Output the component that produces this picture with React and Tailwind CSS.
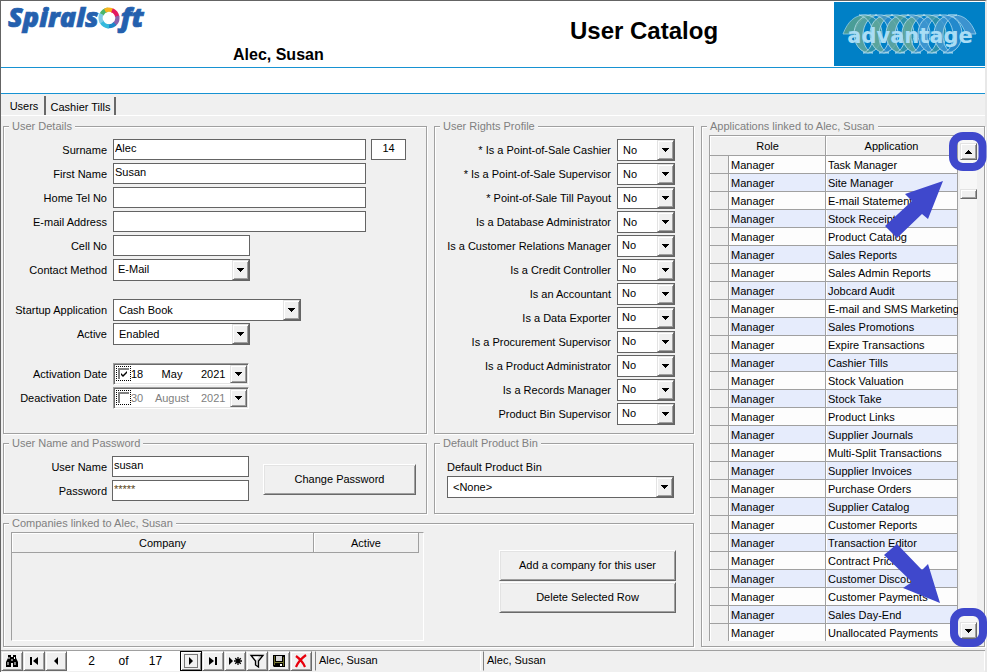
import React, { useId } from "react";

const RIGHTS = [
  ["* Is a Point-of-Sale Cashier", false],
  ["* Is a Point-of-Sale Supervisor", false],
  ["* Point-of-Sale Till Payout", false],
  ["Is a Database Administrator", false],
  ["Is a Customer Relations Manager", true],
  ["Is a Credit Controller", true],
  ["Is an Accountant", true],
  ["Is a Data Exporter", true],
  ["Is a Procurement Supervisor", true],
  ["Is a Product Administrator", true],
  ["Is a Records Manager", true],
  ["Product Bin Supervisor", true],
];

const APPLICATIONS = [
  "Task Manager", "Site Manager", "E-mail Statements", "Stock Receipts", "Product Catalog",
  "Sales Reports", "Sales Admin Reports", "Jobcard Audit", "E-mail and SMS Marketing",
  "Sales Promotions", "Expire Transactions", "Cashier Tills", "Stock Valuation", "Stock Take",
  "Product Links", "Supplier Journals", "Multi-Split Transactions", "Supplier Invoices",
  "Purchase Orders", "Supplier Catalog", "Customer Reports", "Transaction Editor",
  "Contract Pricing", "Customer Discounts", "Customer Payments", "Sales Day-End",
  "Unallocated Payments",
];

const raised =
  "border border-t-[#e3e3e3] border-l-[#e3e3e3] border-r-[#696969] border-b-[#696969] bg-[#f0f0f0] shadow-[inset_1px_1px_0_#fff,inset_-1px_-1px_0_#a0a0a0]";

function DownArrow() {
  return (
    <svg width="7" height="4" viewBox="0 0 7 4" aria-hidden="true">
      <path d="M0 0h7v1h-1v1h-1v1h-1v1h-1v-1h-1v-1h-1v-1h-1z" fill="#000" />
    </svg>
  );
}

function Panel({ title, className = "", children }) {
  return (
    <fieldset
      className={`min-w-0 border border-[#a0a0a0] shadow-[inset_1px_1px_0_#fff,1px_1px_0_#fff] ${className}`}
    >
      <legend className="ml-[5px] h-[13px] bg-[#f0f0f0] px-[3px] leading-[13px] text-[#808080]">{title}</legend>
      {children}
    </fieldset>
  );
}

function Row({ label, id, children }) {
  return (
    <div className="flex h-6 items-start gap-[6px]">
      <label htmlFor={id} className="w-[103px] shrink-0 text-right leading-[22px] whitespace-nowrap">
        {label}
      </label>
      {children}
    </div>
  );
}

function TextBox({ id, className = "w-[253px]", ...rest }) {
  return (
    <input
      id={id}
      className={`h-[21px] border border-[#646464] bg-white px-px pb-1 outline-none ${className}`}
      {...rest}
    />
  );
}

function Combo({ id, value, high = false, className = "" }) {
  return (
    <div className={`relative h-[22px] shrink-0 ${className}`}>
      <select
        id={id}
        className={`block h-full w-full appearance-none border border-[#646464] bg-white outline-none ${
          high ? "pb-[3px] pl-1" : "pl-[5px]"
        }`}
      >
        <option>{value}</option>
      </select>
      <span
        className={`pointer-events-none absolute inset-y-px right-px flex w-[17px] items-center justify-center ${raised}`}
      >
        <DownArrow />
      </span>
    </div>
  );
}

function DateBox({ id, name, day, month, year, on = false }) {
  const tone = on ? "text-black" : "text-[#808080]";
  return (
    <div className="flex h-[22px] w-[136px] items-stretch border border-t-[#a0a0a0] border-l-[#a0a0a0] border-r-white border-b-white bg-white pl-[2px] shadow-[inset_1px_1px_0_#696969,inset_-1px_-1px_0_#e3e3e3]">
      <span className="mt-[2px] grid h-[15px] w-[15px] place-items-center border border-dotted border-black">
        <input
          id={id}
          type="checkbox"
          defaultChecked={on}
          className="col-start-1 row-start-1 h-[11px] w-[11px] appearance-none border-t-2 border-l-2 border-[#808080] bg-white"
        />
        {on && (
          <svg className="pointer-events-none col-start-1 row-start-1" width="9" height="9" viewBox="0 0 9 9">
            <path d="M2 4v2l2 2 4-4V2L4 6z" fill="#000" />
          </svg>
        )}
      </span>
      <input aria-label={`${name} day`} defaultValue={day} className={`w-[14px] outline-none ${tone}`} />
      <input
        aria-label={`${name} month`}
        defaultValue={month}
        className={`ml-[4px] w-[46px] text-center outline-none ${tone}`}
      />
      <input aria-label={`${name} year`} defaultValue={year} className={`ml-[6px] w-[28px] outline-none ${tone}`} />
      <button
        type="button"
        aria-label={`Open ${name}`}
        className={`mt-px mr-px mb-px ml-auto flex w-[17px] items-center justify-center ${raised}`}
      >
        <DownArrow />
      </button>
    </div>
  );
}

function PushButton({ className = "", children }) {
  return (
    <button
      type="button"
      className={`h-[31px] border border-t-white border-l-white border-r-[#696969] border-b-[#696969] bg-[#f0f0f0] pb-[2px] shadow-[inset_1px_1px_0_#e3e3e3,inset_-1px_-1px_0_#a0a0a0] ${className}`}
    >
      {children}
    </button>
  );
}

function SpiralsoftLogo() {
  return (
    <div className="flex items-start font-['Open_Sans',sans-serif] text-[27px] leading-8 font-extrabold text-[#2460ae] italic [-webkit-text-stroke:0.7px_#2460ae]">
      <span>Spirals</span>
      <svg className="mt-[6px] shrink-0" width="22" height="22" viewBox="0 0 22 22" fill="none" strokeWidth="4.200" aria-hidden="true">
        <path d="M3.500 7.500A8.500 8.500 0 0 1 10 2.700" stroke="#4bb56a" />
        <path d="M7 3.600A8.400 8.400 0 0 1 15.500 4.200" stroke="#f9b41c" />
        <path d="M14 3.300A8.400 8.400 0 0 1 19.200 10" stroke="#e5195f" />
        <path d="M19.200 9A8.400 8.400 0 0 1 16 17.500" stroke="#8a62ac" />
        <path d="M17 16.600A8.400 8.400 0 0 1 9 19" stroke="#1c86c8" />
        <path d="M11 19.300A8.400 8.400 0 0 1 3.400 14.400" stroke="#35b9dc" />
        <path d="M3.900 15.400A8.400 8.400 0 0 1 3.600 7" stroke="#7fcbe4" />
      </svg>
      <span>ft</span>
    </div>
  );
}

const LOOPS = [34, 50, 66, 82, 98, 114];

function AdvantageLogo() {
  return (
    <svg width="151" height="64" viewBox="0 0 151 64" role="img" aria-label="advantage">
      <rect width="151" height="64" fill="#0080c6" />
      <path d="M9 32C14 19 21 13 31 13h6C28 15 23 22 19 32z" fill="#4a9d97" stroke="#8ecbe6" strokeWidth="0.800" />
      <path d="M142 32C137 19 130 13 120 13h-6c9 2 14 9 18 19z" fill="#3c93cf" stroke="#9fd4ef" strokeWidth="0.800" />
      {LOOPS.map((x, i) => (
        <g key={x} transform={`translate(${x} 32)`}>
          <path
            d="M2 -19C-20 -16 -18 16 0 19H5C-9 15 -9 -15 9 -19z"
            fill={i < 4 ? "#63a79a" : "#3f97cf"}
            fillOpacity="0.85"
            stroke="#b5def0"
            strokeWidth="0.800"
          />
          <path
            d="M-2 -19C20 -16 18 16 0 19H-5C9 15 9 -15 -9 -19z"
            fill={i % 2 ? "#3b8fd0" : "#4a9d97"}
            fillOpacity="0.6"
            stroke="#b5def0"
            strokeWidth="0.800"
          />
        </g>
      ))}
      <text
        x="76"
        y="41"
        textAnchor="middle"
        fontSize="21"
        fontWeight="700"
        fill="#a9ddf5"
        className="font-['DejaVu_Sans',sans-serif]"
      >
        advantage
      </text>
    </svg>
  );
}

function NavButton({ label, focused = false, children }) {
  return (
    <button
      type="button"
      aria-label={label}
      className={`flex h-5 w-[22px] shrink-0 items-center justify-center ${
        focused ? "border border-black bg-[#f0f0f0] shadow-[inset_1px_1px_0_#fff,inset_-1px_-1px_0_#808080]" : raised
      }`}
    >
      <svg width="16" height="16" viewBox="0 0 16 16" aria-hidden="true">
        {children}
      </svg>
    </button>
  );
}

function Footer() {
  return (
    <footer className="flex h-[21px] items-stretch border-t border-[#a0a0a0]">
      <NavButton label="Find">
        <path d="M4 2h3v2h2V2h3v3l2 4v5H9v-4H7v4H2V9l2-4z" fill="#000" />
        <path d="M5 4v2M10.500 4v2M4 9v3M11 9v3M8 6v2" stroke="#fff" strokeWidth="1" />
      </NavButton>
      <NavButton label="First record">
        <path d="M4 4h2v8H4zM12 4v8L7 8z" fill="#000" />
      </NavButton>
      <NavButton label="Previous record">
        <path d="M10 4v8L6 8z" fill="#000" />
      </NavButton>
      <div className="flex w-[113px] items-center bg-white text-[12px]">
        <input aria-label="Record number" defaultValue="2" className="w-[49px] text-center outline-none" />
        <span className="w-[15px] text-center">of</span>
        <span className="w-[49px] text-center">17</span>
      </div>
      <NavButton label="Next record" focused>
        <rect x="1.500" y="1.500" width="13" height="13" fill="none" stroke="#000" strokeDasharray="1 1" />
        <path d="M6 4v8l4-4z" fill="#000" />
      </NavButton>
      <NavButton label="Last record">
        <path d="M10 4h2v8h-2zM4 4v8l5-4z" fill="#000" />
      </NavButton>
      <NavButton label="New record">
        <path d="M2 4v8l4-4z" fill="#000" />
        <path d="M11 4v8M7 8h8M8.200 5.200l5.600 5.600M13.800 5.200l-5.600 5.600" stroke="#000" strokeWidth="1.300" />
      </NavButton>
      <NavButton label="Filter">
        <path d="M2 2.500h12L9.500 8v6l-3-2V8z" fill="#d8d8d8" stroke="#000" strokeWidth="1.300" />
        <path d="M4 3.500h6L7.500 7z" fill="#fff" />
      </NavButton>
      <NavButton label="Save">
        <path d="M2 2h12v12H3l-1-1z" fill="#000" />
        <path d="M3 3h1v9H3zM12 4h1v9h-1z" fill="#6b6b2a" />
        <path d="M5 3h6v5H5z" fill="#d8d8d8" />
        <path d="M4 9h8v1H4z" fill="#80803a" />
        <path d="M9 11h2v2H9z" fill="#fff" />
      </NavButton>
      <NavButton label="Delete">
        <path d="M3 3c4 3 7 6 9 11M13 2C9 5 5 9 3 14" fill="none" stroke="#e8000c" strokeWidth="2.200" />
      </NavButton>
      <div className="ml-[3px] w-[166px] border border-t-transparent border-r-white border-b-transparent border-l-[#808080] pl-[3px] leading-[16px]">
        Alec, Susan
      </div>
      <div className="ml-[2px] flex-1 border border-t-transparent border-r-white border-b-transparent border-l-[#808080] pl-[3px] leading-[16px]">
        Alec, Susan
      </div>
    </footer>
  );
}

function ApplicationsGrid() {
  const head =
    "h-[20px] border-r border-b border-[#a0a0a0] bg-[#f0f0f0] p-0 text-center font-normal shadow-[inset_1px_1px_0_#fff]";
  const cell = "h-[18px] border-r border-b border-[#a0a0a0] p-0 pl-[2px] whitespace-nowrap shadow-[inset_1px_0_0_#fff]";
  return (
    <div className="mt-[2px] mr-[7px] mb-[5px] ml-[7px] flex h-[506px] gap-[2px] overflow-hidden">
      <div className="flex-1 overflow-hidden border-t border-l border-[#a0a0a0]">
        <table className="w-full table-fixed border-separate border-spacing-0 leading-[14px]">
          <colgroup>
            <col className="w-[19px]" />
            <col className="w-[97px]" />
            <col />
          </colgroup>
          <thead>
            <tr>
              <th colSpan={2} className={head}>Role</th>
              <th className={head}>Application</th>
            </tr>
          </thead>
          <tbody>
            {APPLICATIONS.map((name, i) => (
              <tr key={name} className={i % 2 ? "bg-[#e6ecfc]" : "bg-[#fdfdfd]"}>
                <td className={`${cell} bg-[#f0f0f0]`} />
                <td className={cell}>Manager</td>
                <td className={cell}>{name}</td>
              </tr>
            ))}
          </tbody>
        </table>
      </div>
      <div className="flex w-[17px] flex-col bg-[#f7f7f7] pt-2">
        <button type="button" aria-label="Scroll up" className={`flex h-[17px] items-center justify-center ${raised}`}>
          <svg width="7" height="4" viewBox="0 0 7 4">
            <path d="M3 0h1v1h1v1h1v1h1v1h-7v-1h1v-1h1v-1h1z" fill="#000" />
          </svg>
        </button>
        <div className={`mt-[29px] h-[10px] ${raised}`} />
        <button
          type="button"
          aria-label="Scroll down"
          className={`mt-auto mb-[2px] flex h-[17px] items-center justify-center ${raised}`}
        >
          <DownArrow />
        </button>
      </div>
    </div>
  );
}

/* Callouts that point at the two ends of the scroll bar. */
function ScrollCallouts() {
  return (
    <>
      <svg
        className="pointer-events-none absolute -top-px -right-[3px]"
        width="104"
        height="110"
        viewBox="883 132 104 110"
      >
        <rect x="953" y="136" width="29.500" height="31" rx="10" fill="none" stroke="#3f48cc" strokeWidth="8" />
        <path d="M943 181L928 219L922 214L897 238L885 226L912 201L905 194z" fill="#3f48cc" />
      </svg>
      <svg
        className="pointer-events-none absolute -right-[3px] -bottom-px"
        width="104"
        height="107"
        viewBox="883 540 104 107"
      >
        <rect x="954" y="612" width="29" height="31" rx="10" fill="none" stroke="#3f48cc" strokeWidth="8" />
        <path d="M940 603L903 588L912 582L884 555L897 544L922 570L928 564z" fill="#3f48cc" />
      </svg>
    </>
  );
}

export default function App() {
  const id = useId();
  return (
    <div className="flex min-h-screen flex-col border-t border-r-2 border-l border-t-[#646464] border-r-[#e8e8e8] border-l-[#646464] bg-[#f0f0f0] font-['Liberation_Sans',Arial,sans-serif] text-[11px] leading-[14px] text-black">
      <header className="flex h-[67px] items-start border-b border-b-[#1792d2] bg-white">
        <div className="w-[232px] shrink-0 pl-[7px]">
          <SpiralsoftLogo />
        </div>
        <h2 className="w-[337px] pt-[44px] text-[16px] leading-5 font-bold">Alec, Susan</h2>
        <h1 className="pt-4 text-[24px] leading-7 font-bold">User Catalog</h1>
        <div className="ml-auto pt-px">
          <AdvantageLogo />
        </div>
      </header>
      <div className="h-[26px] border-b border-b-[#1792d2] bg-white" />

      <nav role="tablist" className="flex h-[22px] items-end border-b border-white">
        <button
          type="button"
          role="tab"
          aria-selected="true"
          className="h-[19px] w-[45px] border-r-2 border-[#696969] pl-[3px]"
        >
          Users
        </button>
        <button
          type="button"
          role="tab"
          aria-selected="false"
          className="h-[18px] w-[70px] border-r-2 border-[#696969] pt-px pl-px"
        >
          Cashier Tills
        </button>
      </nav>

      <main className="grid grid-cols-[424fr_260fr_284fr] gap-x-[7px] gap-y-[3px] pt-1 pb-[3px] pl-[2px]">
        <Panel title="User Details">
          <div className="pt-[6px]">
            <Row label="Surname" id={`${id}sn`}>
              <TextBox id={`${id}sn`} defaultValue="Alec" />
              <TextBox aria-label="User number" className="-ml-px w-[35px] text-center" defaultValue="14" />
            </Row>
            <Row label="First Name" id={`${id}fn`}>
              <TextBox id={`${id}fn`} defaultValue="Susan" />
            </Row>
            <Row label="Home Tel No" id={`${id}tel`}>
              <TextBox id={`${id}tel`} />
            </Row>
            <Row label="E-mail Address" id={`${id}em`}>
              <TextBox id={`${id}em`} />
            </Row>
            <Row label="Cell No" id={`${id}cell`}>
              <TextBox id={`${id}cell`} className="w-[137px]" />
            </Row>
            <Row label="Contact Method" id={`${id}cm`}>
              <Combo id={`${id}cm`} value="E-Mail" high className="w-[137px]" />
            </Row>
            <div className="pt-4">
              <Row label="Startup Application" id={`${id}sa`}>
                <Combo id={`${id}sa`} value="Cash Book" className="w-[188px]" />
              </Row>
              <Row label="Active" id={`${id}ac`}>
                <Combo id={`${id}ac`} value="Enabled" className="w-[137px]" />
              </Row>
            </div>
            <div className="pt-4">
              <Row label="Activation Date" id={`${id}ad`}>
                <DateBox id={`${id}ad`} name="Activation Date" day="18" month="May" year="2021" on />
              </Row>
              <Row label="Deactivation Date" id={`${id}dd`}>
                <DateBox id={`${id}dd`} name="Deactivation Date" day="30" month="August" year="2021" />
              </Row>
            </div>
          </div>
        </Panel>

        <Panel title="User Rights Profile">
          <div className="pt-[6px] pr-[18px] pb-[6px]">
            {RIGHTS.map(([label, high], i) => (
              <div key={label} className="flex h-6 items-start justify-end gap-[6px]">
                <label htmlFor={`${id}r${i}`} className="leading-[22px] whitespace-nowrap">
                  {label}
                </label>
                <Combo id={`${id}r${i}`} value="No" high={high} className="w-[58px]" />
              </div>
            ))}
          </div>
        </Panel>

        <Panel title="Applications linked to Alec, Susan" className="relative row-span-3">
          <ApplicationsGrid />
          <ScrollCallouts />
        </Panel>

        <Panel title="User Name and Password">
          <div className="flex justify-between pt-[6px] pr-[10px] pb-[9px]">
            <div>
              <Row label="User Name" id={`${id}un`}>
                <TextBox id={`${id}un`} className="-ml-px w-[137px]" defaultValue="susan" />
              </Row>
              <Row label="Password" id={`${id}pw`}>
                <TextBox id={`${id}pw`} className="-ml-px w-[137px] text-[#5a4520]" defaultValue="*****" />
              </Row>
            </div>
            <PushButton className="mt-2 w-[153px]">Change Password</PushButton>
          </div>
        </Panel>

        <Panel title="Default Product Bin">
          <div className="pt-[10px] pr-[19px] pl-3">
            <label htmlFor={`${id}bin`} className="block h-4">
              Default Product Bin
            </label>
            <Combo id={`${id}bin`} value="<None>" className="w-full" />
          </div>
        </Panel>

        <Panel title="Companies linked to Alec, Susan" className="col-span-2">
          <div className="flex items-start justify-between pt-[2px] pr-[17px] pb-[5px] pl-[7px]">
            <div className="h-[109px] w-[413px] border border-t-[#a0a0a0] border-r-white border-b-white border-l-[#a0a0a0]">
              <table className="w-[407px] table-fixed border-separate border-spacing-0">
                <thead>
                  <tr>
                    <th className="h-5 w-[302px] border-r border-b border-[#a0a0a0] p-0 text-center font-normal shadow-[inset_1px_1px_0_#fff]">
                      Company
                    </th>
                    <th className="h-5 border-r border-b border-[#a0a0a0] p-0 text-center font-normal shadow-[inset_1px_1px_0_#fff]">
                      Active
                    </th>
                  </tr>
                </thead>
              </table>
            </div>
            <div className="flex flex-col gap-px pt-[18px]">
              <PushButton className="w-[177px]">Add a company for this user</PushButton>
              <PushButton className="w-[177px]">Delete Selected Row</PushButton>
            </div>
          </div>
        </Panel>
      </main>

      <Footer />
    </div>
  );
}
